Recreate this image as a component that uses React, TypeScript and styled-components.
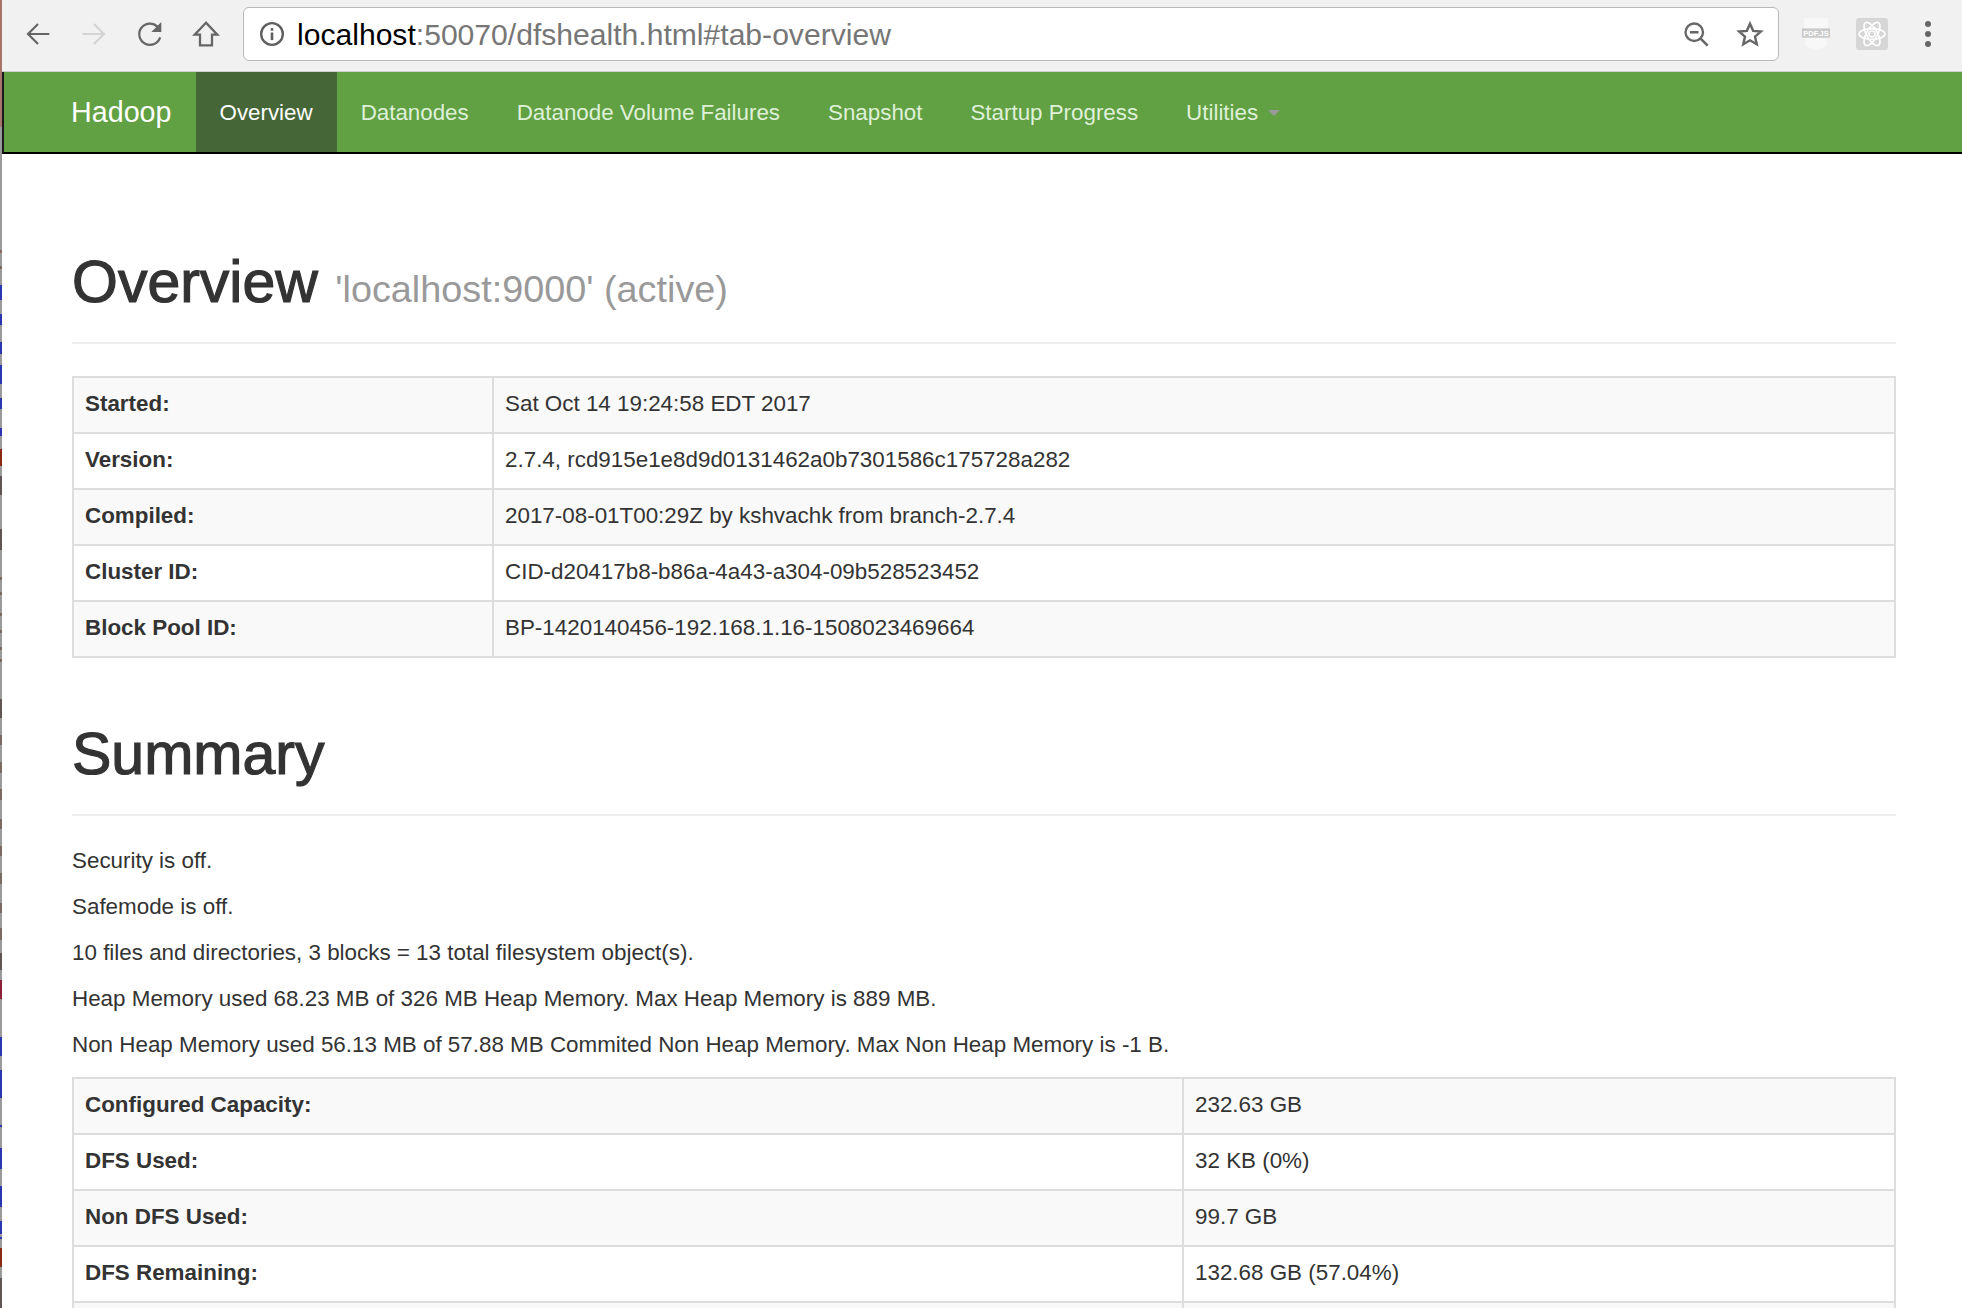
import styled, { createGlobalStyle } from "styled-components";

const GlobalStyle = createGlobalStyle`
  html, body {
    margin: 0;
    padding: 0;
    background: #fff;
  }
  * {
    box-sizing: border-box;
  }
`;

// the window behind the browser shows through on the left edge: [height, colour]
const edgeSegments: Array<[number, string]> = [
  [127, "#a8756c"], [123, "#9a9a9a"], [3, "#8a6a60"], [13, "#9a9a9a"], [3, "#7a6a60"], [16, "#9a9a9a"],
  [15, "#2a35b0"], [14, "#9a9a9a"], [11, "#2a35b0"], [17, "#9a9a9a"], [12, "#2a35b0"], [11, "#9a9a9a"],
  [19, "#2a35b0"], [14, "#9a9a9a"], [11, "#2a35b0"], [19, "#9a9a9a"], [8, "#2a35b0"], [13, "#9a9a9a"],
  [17, "#8a2a10"], [10, "#9a9a9a"], [19, "#5f5552"], [34, "#9a9a9a"], [21, "#5f5552"], [27, "#9a9a9a"],
  [3, "#7a6a60"], [12, "#9a9a9a"], [3, "#7a6a60"], [18, "#9a9a9a"], [3, "#7a6a60"], [14, "#9a9a9a"],
  [3, "#7a6a60"], [14, "#9a9a9a"], [3, "#7a6a60"], [9, "#9a9a9a"], [3, "#7a6a60"], [37, "#9a9a9a"],
  [19, "#5f5552"], [17, "#9a9a9a"], [10, "#7a6a60"], [17, "#9a9a9a"], [11, "#7a6a60"], [16, "#9a9a9a"],
  [11, "#7a6a60"], [19, "#9a9a9a"], [10, "#7a6a60"], [17, "#9a9a9a"], [10, "#7a6a60"], [17, "#9a9a9a"],
  [11, "#7a6a60"], [19, "#9a9a9a"], [10, "#7a6a60"], [15, "#9a9a9a"], [12, "#7a6a60"], [13, "#9a9a9a"],
  [17, "#5f5552"], [10, "#9a9a9a"], [19, "#8c1f3a"], [38, "#9a9a9a"], [19, "#2a35b0"], [14, "#9a9a9a"],
  [28, "#2a35b0"], [27, "#9a9a9a"], [2, "#2a35b0"], [21, "#9a9a9a"], [21, "#2a35b0"], [17, "#9a9a9a"],
  [21, "#2a35b0"], [14, "#9a9a9a"], [13, "#2a35b0"], [3, "#9a9a9a"], [2, "#2a35b0"], [9, "#9a9a9a"],
  [19, "#8a2a10"], [11, "#9a9a9a"], [33, "#5f5552"],
];

const navItems = ["Datanodes", "Datanode Volume Failures", "Snapshot", "Startup Progress"];

const overviewRows = [
  ["Started:", "Sat Oct 14 19:24:58 EDT 2017"],
  ["Version:", "2.7.4, rcd915e1e8d9d0131462a0b7301586c175728a282"],
  ["Compiled:", "2017-08-01T00:29Z by kshvachk from branch-2.7.4"],
  ["Cluster ID:", "CID-d20417b8-b86a-4a43-a304-09b528523452"],
  ["Block Pool ID:", "BP-1420140456-192.168.1.16-1508023469664"],
];

const summaryLines = [
  "Security is off.",
  "Safemode is off.",
  "10 files and directories, 3 blocks = 13 total filesystem object(s).",
  "Heap Memory used 68.23 MB of 326 MB Heap Memory. Max Heap Memory is 889 MB.",
  "Non Heap Memory used 56.13 MB of 57.88 MB Commited Non Heap Memory. Max Non Heap Memory is -1 B.",
];

// the last row only shows its top border in the window
const summaryRows = [
  ["Configured Capacity:", "232.63 GB"],
  ["DFS Used:", "32 KB (0%)"],
  ["Non DFS Used:", "99.7 GB"],
  ["DFS Remaining:", "132.68 GB (57.04%)"],
  ["", ""],
];

const InfoTable = (props: { rows: Array<Array<string>>; labelWidth: number }) => {
  return (
    <Table>
      <colgroup>
        <col width={props.labelWidth} />
        <col />
      </colgroup>
      <tbody>
        {props.rows.map((row, index) => {
          return (
            <tr key={index}>
              <LabelCell>{row[0]}</LabelCell>
              <ValueCell>{row[1]}</ValueCell>
            </tr>
          );
        })}
      </tbody>
    </Table>
  );
};

const App = () => {
  return (
    <>
      <GlobalStyle />
      <Screen>
        <Edge>
          {edgeSegments.map((segment, index) => {
            return <EdgeSegment key={index} style={{ height: segment[0], background: segment[1] }} />;
          })}
        </Edge>
        <Browser>
          <Toolbar>
            <NavButtons>
              <NavIcon viewBox="0 0 24 24">
                <path d="M20.5 12H5M12 4.5L4.5 12l7.5 7.5" fill="none" stroke="#666" strokeWidth="1.6" />
              </NavIcon>
              <NavIcon viewBox="0 0 24 24">
                <path d="M3.5 12H19M12 4.5l7.5 7.5-7.5 7.5" fill="none" stroke="#d4d4d4" strokeWidth="1.6" />
              </NavIcon>
              <NavIcon viewBox="0 0 24 24">
                <path d="M19.6 14.5A8 8 0 1 1 17.6 6.5" fill="none" stroke="#666" strokeWidth="1.7" />
                <path d="M20.5 3v7.5H13z" fill="#666" />
              </NavIcon>
              <NavIcon viewBox="0 0 24 24">
                <path d="M12 3.5L3.5 12.5H7.5V20.5H16.5V12.5H20.5Z" fill="none" stroke="#666" strokeWidth="1.7" />
              </NavIcon>
            </NavButtons>
            <AddressBar>
              <InfoIcon viewBox="0 0 24 24">
                <circle cx="12" cy="12" r="10" fill="none" stroke="#5f5f5f" strokeWidth="2.2" />
                <rect x="10.8" y="10.6" width="2.4" height="7" fill="#5f5f5f" />
                <rect x="10.8" y="6.6" width="2.4" height="2.4" fill="#5f5f5f" />
              </InfoIcon>
              <Url>
                <UrlHost>localhost</UrlHost>:50070/dfshealth.html#tab-overview
              </Url>
              <AddressActions>
                <ToolIcon viewBox="0 0 24 24">
                  <circle cx="10.5" cy="10.5" r="7.5" fill="none" stroke="#666" strokeWidth="2" />
                  <path d="M6.8 10.5h7.4M16 16l6 6" fill="none" stroke="#666" strokeWidth="2.2" />
                </ToolIcon>
                <ToolIcon viewBox="0 0 24 24">
                  <path
                    d="M12 3.2l2.7 6.1 6.6.6-5 4.4 1.5 6.5-5.8-3.4-5.8 3.4 1.5-6.5-5-4.4 6.6-.6z"
                    fill="none"
                    stroke="#666"
                    strokeWidth="2.1"
                  />
                </ToolIcon>
              </AddressActions>
            </AddressBar>
            <Extensions>
              <ExtensionIcon viewBox="0 0 32 34">
                <path d="M3 0h26l-2 30-11 4-11-4z" fill="#f8f8f8" />
                <rect x="1" y="11" width="30" height="10" fill="#cbcbcb" />
                <PdfLabel x="16" y="19.4" textAnchor="middle">
                  PDF.JS
                </PdfLabel>
              </ExtensionIcon>
              <ExtensionIcon viewBox="0 0 32 32">
                <rect width="32" height="32" rx="3" fill="#d6d6d6" />
                <g fill="none" stroke="#fff" strokeWidth="1.6">
                  <circle cx="16" cy="16" r="3" />
                  <ellipse cx="16" cy="16" rx="13" ry="5.4" />
                  <ellipse cx="16" cy="16" rx="13" ry="5.4" transform="rotate(60 16 16)" />
                  <ellipse cx="16" cy="16" rx="13" ry="5.4" transform="rotate(120 16 16)" />
                </g>
              </ExtensionIcon>
              <MenuDots viewBox="0 0 8 28">
                <circle cx="4" cy="4" r="3" fill="#666" />
                <circle cx="4" cy="14" r="3" fill="#666" />
                <circle cx="4" cy="24" r="3" fill="#666" />
              </MenuDots>
            </Extensions>
          </Toolbar>
          <Navbar>
            <Brand>Hadoop</Brand>
            <NavLink $active>Overview</NavLink>
            {navItems.map((item, index) => {
              return <NavLink key={index}>{item}</NavLink>;
            })}
            <NavLink>
              Utilities
              <Caret />
            </NavLink>
          </Navbar>
          <Content>
            <PageHeader>
              <PageTitle>
                Overview <PageSubtitle>'localhost:9000' (active)</PageSubtitle>
              </PageTitle>
            </PageHeader>
            <InfoTable rows={overviewRows} labelWidth={420} />
            <SummaryHeader>
              <PageTitle>Summary</PageTitle>
            </SummaryHeader>
            <SummaryText>
              {summaryLines.map((line, index) => {
                return <SummaryLine key={index}>{line}</SummaryLine>;
              })}
            </SummaryText>
            <InfoTable rows={summaryRows} labelWidth={1110} />
          </Content>
        </Browser>
      </Screen>
    </>
  );
};

export default App;

const Screen = styled.div`
  display: flex;
  width: 1962px;
  height: 1308px;
  overflow: hidden;
  font-family: "Liberation Sans", Arial, sans-serif;
  color: #333;
`;

const Edge = styled.div`
  flex: 0 0 2px;
  display: flex;
  flex-direction: column;
`;

const EdgeSegment = styled.div`
  flex: none;
`;

const Browser = styled.div`
  flex: 1;
  min-width: 0;
`;

const Toolbar = styled.header`
  display: flex;
  align-items: center;
  height: 72px;
  padding-bottom: 4px;
  background: #f1f1f1;
  border-bottom: 1px solid #cfcfcf;
`;

const NavButtons = styled.div`
  display: flex;
  gap: 24px;
  width: 241px;
  padding-left: 20px;
`;

const NavIcon = styled.svg`
  width: 32px;
  height: 32px;
  display: block;
`;

const ToolIcon = styled.svg`
  width: 28px;
  height: 28px;
  display: block;
`;

const AddressBar = styled.div`
  display: flex;
  align-items: center;
  width: 1536px;
  height: 54px;
  padding: 0 14px 0 15px;
  background: #fff;
  border: 1px solid #b9b9b9;
  border-radius: 6px;
`;

const InfoIcon = styled.svg`
  width: 26px;
  height: 26px;
  flex: none;
`;

const Url = styled.div`
  flex: 1;
  margin-left: 12px;
  padding-top: 2px;
  font-size: 30.1px;
  color: #767676;
`;

const UrlHost = styled.span`
  color: #000;
`;

const AddressActions = styled.div`
  display: flex;
  gap: 26px;
`;

const Extensions = styled.div`
  display: flex;
  align-items: center;
  gap: 24px;
  padding-left: 21px;
`;

const ExtensionIcon = styled.svg`
  width: 32px;
  height: 32px;
  display: block;
`;

const PdfLabel = styled.text`
  font-family: "Liberation Sans", Arial, sans-serif;
  font-size: 8px;
  font-weight: 700;
  fill: #fff;
`;

const MenuDots = styled.svg`
  width: 8px;
  height: 28px;
  margin-left: 12px;
`;

const Navbar = styled.nav`
  display: flex;
  height: 82px;
  padding-left: 67px;
  background: #61a043;
  border-left: 2px solid #1a1a1a;
  border-bottom: 2px solid #000;
`;

const Brand = styled.a`
  display: flex;
  align-items: center;
  padding-right: 24px;
  font-size: 28.7px;
  color: #fff;
`;

const NavLink = styled.a<{ $active?: boolean }>`
  display: flex;
  align-items: center;
  padding: 1px 24px 0;
  font-size: 22.35px;
  color: ${(props) => (props.$active ? "#fff" : "#dff0d8")};
  background: ${(props) => (props.$active ? "#456636" : "transparent")};
`;

const Caret = styled.span`
  width: 0;
  height: 0;
  margin-left: 10px;
  border-top: 6px solid #9a9a9a;
  border-left: 6px solid transparent;
  border-right: 6px solid transparent;
`;

const Content = styled.main`
  padding: 0 66px 0 70px;
`;

const PageHeader = styled.div`
  height: 190px;
  padding-top: 92px;
  margin-bottom: 32px;
  border-bottom: 2px solid #eee;
`;

const PageTitle = styled.h1`
  margin: 0;
  font-size: 59px;
  font-weight: 400;
  line-height: 72px;
  -webkit-text-stroke: 1.2px #333;
`;

const PageSubtitle = styled.small`
  margin-left: 1px;
  font-size: 37.8px;
  color: #999;
  -webkit-text-stroke: 0;
`;

const Table = styled.table`
  width: 100%;
  table-layout: fixed;
  border-collapse: collapse;
  border: 2px solid #ddd;
  font-size: 22.4px;

  tr {
    height: 56px;
  }
  tr:nth-child(odd) {
    background: #f9f9f9;
  }
`;

const LabelCell = styled.th`
  padding: 0 11px 2px;
  text-align: left;
  font-weight: 700;
  border: 2px solid #ddd;
`;

const ValueCell = styled.td`
  padding: 0 11px 2px;
  border: 2px solid #ddd;
`;

const SummaryHeader = styled.div`
  height: 158px;
  padding-top: 60px;
  margin-bottom: 29px;
  border-bottom: 2px solid #eee;
`;

const SummaryText = styled.div`
  margin-bottom: 17px;
`;

const SummaryLine = styled.p`
  margin: 0 0 15px;
  font-size: 22.4px;
  line-height: 31px;
`;
